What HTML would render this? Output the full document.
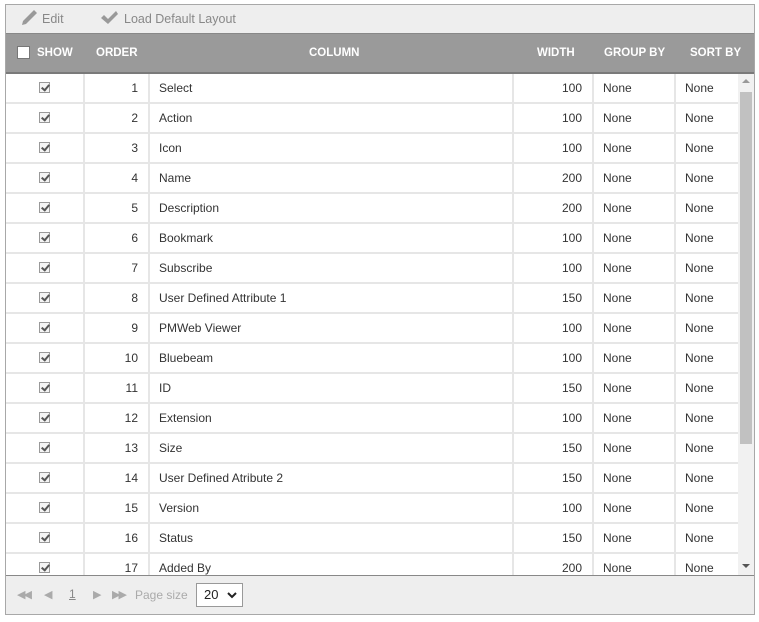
<!DOCTYPE html>
<html><head><style>
*{box-sizing:border-box;margin:0;padding:0}
body{width:759px;height:622px;background:#fff;font-family:"Liberation Sans",sans-serif;font-size:12px;color:#333;position:relative;overflow:hidden}
.wrap{position:absolute;left:5px;top:4px;width:750px;height:611px;border:1px solid #a8a8a8;background:#fff}
.tb{height:29px;background:#eee;border-bottom:1px solid #888;color:#888;font-size:12.5px;position:relative}
.tb span{position:absolute;top:7px}
.hd{height:40px;background:#9a9a9a;border-bottom:2px solid #7a7a7a;position:relative;color:#fff;font-weight:bold;font-size:11.5px}
.hd div{position:absolute;top:13px}
.body{position:absolute;left:0;top:69px;width:748px;height:501px;overflow:hidden}
.row{position:absolute;left:0;height:30px;width:732px;border-bottom:2px solid #e6e6e6}
.c{position:absolute;top:0;height:28px;line-height:28px;border-right:2px solid #e6e6e6}
.cb{display:inline-block;width:11px;height:11px;border:1px solid #999;background:#f4f4f4;position:relative;vertical-align:middle;margin-top:-3px}
.cb:after{content:"";position:absolute;left:3px;top:0px;width:3px;height:6px;border:solid #555;border-width:0 2px 2px 0;transform:rotate(40deg)}
.sb{position:absolute;left:732px;top:0;width:16px;height:501px;background:#f1f1f1}
.thumb{position:absolute;left:2px;top:18px;width:12px;height:352px;background:#c1c1c1}
.ft{position:absolute;left:0;top:570px;width:748px;height:39px;background:#eee;border-top:1px solid #888;color:#aaa}
</style></head><body>
<div class="wrap">
<div class="tb">
<span style="left:14px;top:5px"><svg width="18" height="16" viewBox="0 0 18 16"><path d="M2 15l1-4 9-9 3 3-9 9z M12 2l2-2 3 3-2 2z" fill="#999"/></svg></span>
<span style="left:36px">Edit</span>
<span style="left:94px;top:5px"><svg width="18" height="16" viewBox="0 0 18 16"><path d="M1 8l3-3 4 4 8-8 2 3-10 10z" fill="#999"/></svg></span>
<span style="left:118px">Load Default Layout</span>
</div>
<div class="hd">
<div style="left:11px;top:12px;width:13px;height:13px;background:#fff;border:1px solid #777"></div>
<div style="left:31px">SHOW</div>
<div style="left:90px">ORDER</div>
<div style="left:303px">COLUMN</div>
<div style="left:531px">WIDTH</div>
<div style="left:598px">GROUP BY</div>
<div style="left:684px">SORT BY</div>
</div>
<div class="body" id="b"></div>
<div class="ft">
<span style="position:absolute;left:11px;top:12px;font-size:11px;letter-spacing:-2px">◀◀</span>
<span style="position:absolute;left:38px;top:12px;font-size:11px">◀</span>
<span style="position:absolute;left:63px;top:11px;text-decoration:underline;color:#888">1</span>
<span style="position:absolute;left:87px;top:12px;font-size:11px">▶</span>
<span style="position:absolute;left:106px;top:12px;font-size:11px;letter-spacing:-2px">▶▶</span>
<span style="position:absolute;left:129px;top:12px">Page size</span>
<div style="position:absolute;left:190px;top:7px;width:47px;height:24px;border:1px solid #999;background:#fff;color:#222;font-size:13px;line-height:22px;padding-left:7px">20<svg style="position:absolute;left:30px;top:8px" width="10" height="7" viewBox="0 0 10 7"><path d="M1 1l4 4 4-4" stroke="#222" stroke-width="2" fill="none"/></svg></div>
</div>
</div>
<script>
var d=[["Select",100],["Action",100],["Icon",100],["Name",200],["Description",200],["Bookmark",100],["Subscribe",100],["User Defined Attribute 1",150],["PMWeb Viewer",100],["Bluebeam",100],["ID",150],["Extension",100],["Size",150],["User Defined Atribute 2",150],["Version",100],["Status",150],["Added By",200]];
var h="";d.forEach(function(r,i){h+='<div class="row" style="top:'+(i*30)+'px">'+
'<div class="c" style="left:0;width:79px;text-align:center"><span class="cb"></span></div>'+
'<div class="c" style="left:79px;width:65px;text-align:right;padding-right:10px">'+(i+1)+'</div>'+
'<div class="c" style="left:144px;width:364px;padding-left:9px">'+r[0]+'</div>'+
'<div class="c" style="left:508px;width:80px;text-align:right;padding-right:10px">'+r[1]+'</div>'+
'<div class="c" style="left:588px;width:82px;padding-left:9px">None</div>'+
'<div class="c" style="left:670px;width:62px;padding-left:9px;border-right:0">None</div></div>';});
h+='<div class="sb"><div style="position:absolute;left:4px;top:5px;border:4px solid transparent;border-bottom:4px solid #999;border-top:0"></div><div class="thumb"></div><div style="position:absolute;left:4px;top:490px;border:4px solid transparent;border-top:4px solid #555;border-bottom:0"></div></div>';
document.getElementById("b").innerHTML=h;
</script>
</body></html>
